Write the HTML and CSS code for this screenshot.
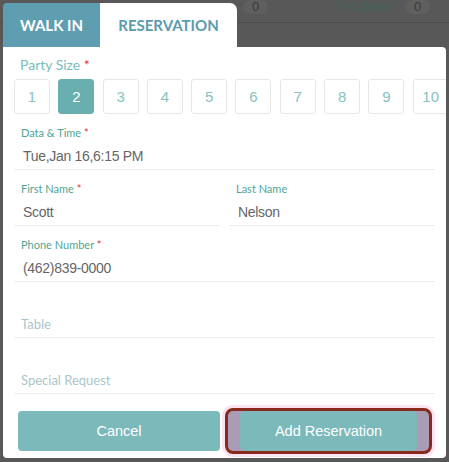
FILE: index.html
```html
<!DOCTYPE html>
<html>
<head>
  <meta charset="UTF-8">
  <title>Reservation</title>
  <meta name="viewport" content="width=device-width, initial-scale=1.0">
  <link rel="stylesheet" href="styles.css">
</head>
<body>
  <!-- Page behind the modal -->
  <div class="backdrop">
    <div class="guest-row">
      <span class="pill">0</span>
      <span class="guest">5-6 Guest</span>
      <span class="pill">0</span>
    </div>
  </div>

  <!-- Reservation modal -->
  <div class="modal">
    <div class="tabs">
      <div class="tab">WALK IN</div>
      <div class="tab active">RESERVATION</div>
    </div>

    <div class="card">
      <div class="party-label">Party Size <span class="req">*</span></div>
      <div class="party-sizes">
        <div class="size">1</div>
        <div class="size selected">2</div>
        <div class="size">3</div>
        <div class="size">4</div>
        <div class="size">5</div>
        <div class="size">6</div>
        <div class="size">7</div>
        <div class="size">8</div>
        <div class="size">9</div>
        <div class="size">10</div>
      </div>

      <div class="field">
        <div class="label">Data &amp; Time <span class="req">*</span></div>
        <div class="value">Tue,Jan 16,6:15 PM</div>
      </div>

      <div class="field-row">
        <div class="field">
          <div class="label">First Name <span class="req">*</span></div>
          <div class="value">Scott</div>
        </div>
        <div class="field">
          <div class="label">Last Name</div>
          <div class="value">Nelson</div>
        </div>
      </div>

      <div class="field">
        <div class="label">Phone Number <span class="req">*</span></div>
        <div class="value">(462)839-0000</div>
      </div>

      <div class="field">
        <div class="label"></div>
        <div class="value placeholder">Table</div>
      </div>

      <div class="field">
        <div class="label"></div>
        <div class="value placeholder">Special Request</div>
      </div>

      <div class="actions">
        <button class="btn btn-cancel">Cancel</button>
        <button class="btn btn-focus">Add Reservation</button>
      </div>
    </div>
  </div>
</body>
</html>
```

FILE: styles.css
```css
body {
  margin: 0;
  padding: 0;
  background-color: #585858;
  font-family: "Liberation Sans", Arial, sans-serif;
  width: 449px;
  height: 462px;
  overflow: hidden;
  position: relative;
}

  /*Backdrop*/
.backdrop {
  height: 22px;
  border-bottom: 1px solid #4c4c4c;
}

.guest-row {
  display: flex;
  align-items: center;
  padding-left: 243px;
  height: 14px;
  font-size: 13px;
  color: #3f6359;
}

.pill {
  display: inline-block;
  width: 25px;
  height: 14px;
  line-height: 14px;
  text-align: center;
  background: #5f5f5f;
  border-radius: 7px;
  color: #3a3a3a;
}

.guest {
  margin-left: 63px;
  margin-right: 12px;
  width: 62px;
  text-align: right;
  line-height: 14px;
}

  /*Modal*/
.modal {
  position: absolute;
  top: 3px;
  left: 3px;
  width: 443px;
}

.tabs {
  display: flex;
  height: 44px;
}

.tab {
  width: 97px;
  display: flex;
  align-items: center;
  justify-content: center;
  background-color: #5f9eb0;
  color: white;
  font-family: Lato, sans-serif;
  font-weight: bold;
  font-size: 15px;
  border-top-left-radius: 4px;
}

.tab.active {
  width: 137px;
  background-color: white;
  color: #5a9bad;
  border-radius: 0 7px 0 0;
}

.card {
  background: white;
  height: 411px;
  border-radius: 0 4px 4px 4px;
  overflow: hidden;
}

.party-label {
  font-family: Lato, sans-serif;
  font-size: 14px;
  color: #78bcbc;
  padding: 9px 0 0 17px;
  height: 18px;
  line-height: 18px;
}

.req {
  color: #e3304a;
}

.party-sizes {
  display: flex;
  gap: 8.3px;
  margin: 5px 0 0 11px;
}

.size {
  flex: none;
  width: 34px;
  height: 33px;
  border: 1px solid #e6e6e6;
  border-radius: 3px;
  display: flex;
  align-items: center;
  justify-content: center;
  font-size: 15px;
  color: #86c2c2;
}

.size.selected {
  background-color: #6aafb0;
  border-color: #6aafb0;
  color: white;
}

  /*Fields*/
.field {
  margin: 11px 11px 0 11px;
  border-bottom: 1px solid #ececec;
}

.field-row {
  display: flex;
  gap: 9px;
  margin: 0 11px;
}

.field-row .field {
  flex: 1;
  margin: 11px 0 0 0;
}

.label {
  font-family: Lato, sans-serif;
  font-size: 11px;
  line-height: 16px;
  height: 16px;
  color: #4fa592;
  padding-left: 7px;
}

.value {
  margin-top: 2px;
  height: 26px;
  line-height: 26px;
  font-size: 14px;
  letter-spacing: -0.3px;
  color: #666;
  padding-left: 9px;
}

.value.placeholder {
  font-family: Lato, sans-serif;
  font-size: 13px;
  letter-spacing: 0;
  color: #a9c6cb;
  padding-left: 7px;
}

  /*Buttons*/
.actions {
  display: flex;
  gap: 5px;
  margin: 17px 14px 0 15px;
}

.btn {
  height: 40px;
  border: none;
  border-radius: 4px;
  background: #7cb9ba;
  color: white;
  font-family: "Liberation Sans", Arial, sans-serif;
  font-size: 14.5px;
}

.btn-cancel {
  width: 202px;
}

.btn-focus {
  width: 207px;
  height: 46px;
  margin-top: -3px;
  border: 3px solid #8a2a1c;
  border-radius: 8px;
  box-shadow: 0 0 0 3px #fbe3f1, inset 12px 0 0 #ab9cb6, inset -12px 0 0 #ab9cb6;
}
```
